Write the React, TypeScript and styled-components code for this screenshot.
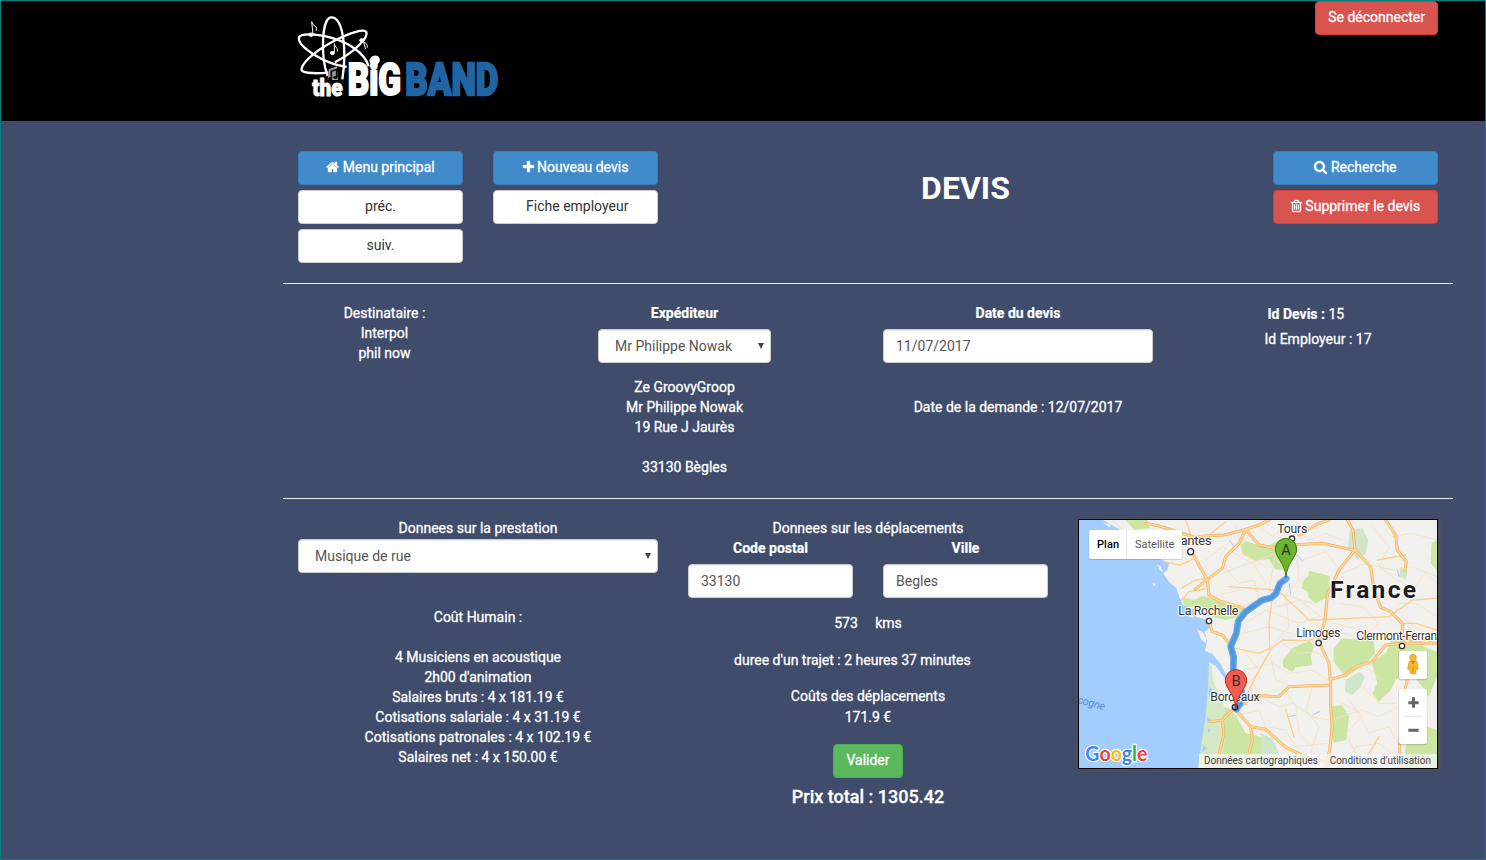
import React from "react";
import styled, { createGlobalStyle } from "styled-components";

const GlobalStyle = createGlobalStyle`
  * { box-sizing: border-box; }
  body {
    margin: 0;
    font: 400 14px/20px Roboto, sans-serif;
    color: #fff;
    background: #404c6b;
  }
`;

const Page = styled.div`
  height: 860px;
  overflow: hidden;
  border: 1px solid #008080;
  background: #404c6b;
`;

const Header = styled.header`
  display: flex;
  justify-content: space-between;
  align-items: flex-start;
  height: 120px;
  padding: 0 47px 0 297px;
  background: #000;
`;

const Logo = styled.svg`
  display: block;
  width: 204px;
  height: 90px;
  margin: 13px 0 0 -1px;
`;

const Main = styled.main`
  width: 1170px;
  margin-left: 282px;
`;

const tones = {
  primary: { bg: "#428bca", border: "#357ebd", text: "#fff" },
  danger: { bg: "#d9534f", border: "#d43f3a", text: "#fff" },
  success: { bg: "#5cb85c", border: "#4cae4c", text: "#fff" },
  plain: { bg: "#fff", border: "#ccc", text: "#333" },
};

const Button = styled.button<{ $tone: keyof typeof tones }>`
  display: flex;
  align-items: center;
  justify-content: center;
  gap: 3.5px;
  height: 34px;
  padding: 0 12px 2px;
  font: inherit;
  -webkit-text-stroke: ${(p) => (p.$tone === "plain" ? 0 : 0.3)}px currentColor;
  white-space: nowrap;
  color: ${(p) => tones[p.$tone].text};
  background: ${(p) => tones[p.$tone].bg};
  border: 1px solid ${(p) => tones[p.$tone].border};
  border-radius: 4px;
`;

const Toolbar = styled.section`
  display: flex;
  gap: 30px;
  height: 163px;
  padding: 30px 15px 0;
  border-bottom: 1px solid #eee;
`;

const ButtonStack = styled.div`
  display: flex;
  flex-direction: column;
  gap: 5px;
  width: 165px;
`;

const Title = styled.h1`
  flex: 1;
  margin: 17px 0 0;
  font-size: 32px;
  line-height: 40px;
  font-weight: 700;
  text-align: center;
`;

const Parties = styled.section`
  display: flex;
  height: 215px;
  padding-top: 19px;
  border-bottom: 1px solid #eee;
`;

const Column = styled.div<{ $width: number; $left?: number }>`
  width: ${(p) => p.$width}px;
  margin-left: ${(p) => p.$left ?? 0}px;
  text-align: center;
`;

const Line = styled.div<{ $top?: number }>`
  height: 20px;
  margin-top: ${(p) => p.$top ?? 0}px;
  -webkit-text-stroke: 0.3px currentColor;
  white-space: pre;

  b {
    -webkit-text-stroke: 0.2px currentColor;
  }
`;

const Label = styled.label`
  display: block;
  height: 20px;
  font-weight: 700;
  -webkit-text-stroke: 0.2px currentColor;
`;

const Field = styled.input`
  display: block;
  width: 100%;
  height: 34px;
  margin-top: 6px;
  padding: 0 12px;
  font: inherit;
  color: #555;
  background: #fff;
  border: 1px solid #ccc;
  border-radius: 4px;
  box-shadow: inset 0 1px 1px rgba(0, 0, 0, 0.075);
`;

const Select = styled.div<{ $top: number }>`
  display: flex;
  align-items: center;
  justify-content: space-between;
  height: 34px;
  margin-top: ${(p) => p.$top}px;
  padding: 0 6px 0 16px;
  color: #555;
  background: #fff;
  border: 1px solid #ccc;
  border-radius: 4px;
  box-shadow: inset 0 1px 1px rgba(0, 0, 0, 0.075);
`;

const Caret = styled.span`
  width: 0;
  border: solid transparent;
  border-width: 6px 3px 0;
  border-top-color: #444;
`;

const Details = styled.section`
  display: flex;
  gap: 30px;
  padding: 19px 15px 0;
`;

const Pair = styled.div`
  display: grid;
  grid-template-columns: 165px 165px;
  gap: 30px;
`;

const ValidateRow = styled.div`
  display: flex;
  justify-content: center;
  margin-top: 17px;
`;

const Total = styled.div`
  margin-top: 8px;
  font-size: 18px;
  line-height: 22px;
  font-weight: 500;
  -webkit-text-stroke: 0.3px currentColor;
`;

const MapFrame = styled.div`
  width: 360px;
  height: 250px;
  margin-top: 1px;
  border: 1px solid #000;
  box-shadow: 1px 1px 5px #555;
`;

const MapDrawing = styled.svg`
  display: block;
  width: 358px;
  height: 248px;
`;

const Glyph = styled.svg<{ $width: number }>`
  width: ${(p) => p.$width}px;
  height: 14px;
  fill: currentColor;
  stroke: currentColor;
  stroke-width: 40px;
`;

const glyphs = {
  home: {
    box: "64 0 1664 1792",
    width: 13,
    d: "M1472 992v480q0 26-19 45t-45 19h-384v-384h-256v384h-384q-26 0-45-19t-19-45v-480q0-1 .5-3t.5-3l575-474 575 474q1 2 1 6zm223-69l-62 74q-8 9-21 11h-3q-13 0-21-7l-692-577-692 577q-12 8-24 7-13-2-21-11l-62-74q-8-10-7-23.5t11-21.5l719-599q32-26 76-26t76 26l244 204v-195q0-14 9-23t23-9h192q14 0 23 9t9 23v408l219 182q10 8 11 21.5t-7 23.5z",
  },
  plus: {
    box: "192 0 1408 1792",
    width: 11,
    d: "M1600 736v192q0 40-28 68t-68 28h-416v416q0 40-28 68t-68 28h-192q-40 0-68-28t-28-68v-416h-416q-40 0-68-28t-28-68v-192q0-40 28-68t68-28h416v-416q0-40 28-68t68-28h192q40 0 68 28t28 68v416h416q40 0 68 28t28 68z",
  },
  search: {
    box: "64 0 1664 1792",
    width: 13,
    d: "M1216 832q0-185-131.5-316.5t-316.5-131.5-316.5 131.5-131.5 316.5 131.5 316.5 316.5 131.5 316.5-131.5 131.5-316.5zm512 832q0 52-38 90t-90 38q-54 0-90-38l-343-342q-179 124-399 124-143 0-273.5-55.5t-225-150-150-225-55.5-273.5 55.5-273.5 150-225 225-150 273.5-55.5 273.5 55.5 225 150 150 225 55.5 273.5q0 220-124 399l343 343q37 37 37 90z",
  },
  trash: {
    box: "192 0 1408 1792",
    width: 11,
    d: "M704 736v576q0 14-9 23t-23 9h-64q-14 0-23-9t-9-23v-576q0-14 9-23t23-9h64q14 0 23 9t9 23zm256 0v576q0 14-9 23t-23 9h-64q-14 0-23-9t-9-23v-576q0-14 9-23t23-9h64q14 0 23 9t9 23zm256 0v576q0 14-9 23t-23 9h-64q-14 0-23-9t-9-23v-576q0-14 9-23t23-9h64q14 0 23 9t9 23zm128 724v-948h-896v948q0 22 7 40.5t14.5 27 10.5 8.5h832q3 0 10.5-8.5t14.5-27 7-40.5zm-672-1076h448l-48-117q-7-9-17-11h-317q-10 2-17 11zm928 32v64q0 14-9 23t-23 9h-96v948q0 83-47 143.5t-113 60.5h-832q-66 0-113-58.5t-47-141.5v-952h-96q-14 0-23-9t-9-23v-64q0-14 9-23t23-9h309l70-167q15-37 54-63t79-26h320q40 0 79 26t54 63l70 167h309q14 0 23 9t9 23z",
  },
};

function Icon({ name }: { name: keyof typeof glyphs }) {
  const g = glyphs[name];
  return (
    <Glyph $width={g.width} viewBox={g.box} overflow="visible" aria-hidden>
      <path d={g.d} />
    </Glyph>
  );
}

function BandLogo() {
  return (
    <Logo viewBox="51 42 612 270" overflow="visible" aria-label="the Big Band">
      <g fill="none" stroke="#fff" strokeWidth="7">
        <path d="M143 228C121 170 125 54 153 52C190 50 201 150 187 238" />
        <path d="M200 201C130 190 51 139 57 112C66 88 240 112 266 199" />
        <path d="M145 218C95 222 60 219 65 205C78 155 246 73 259 96C266 113 225 155 165 187" />
      </g>
      <g fill="#fff" stroke="#fff" strokeWidth="3">
        <ellipse cx="93" cy="104" rx="7" ry="5" />
        <path d="M99 102L95 65Q100 78 109 82V92" fill="none" />
        <ellipse cx="157" cy="159" rx="6" ry="5" />
        <path d="M163 158V131Q165 142 172 146V155" fill="none" />
        <ellipse cx="245" cy="121" rx="6" ry="5" />
        <path d="M250 122L257 148M252 128Q262 128 262 143" fill="none" />
      </g>
      <path d="M146 208L171 198L174 240H143Z" fill="#999" />
      <path d="M154 236V214L170 208V232" fill="none" stroke="#000" strokeWidth="5" />
      <ellipse cx="150" cy="237" rx="6" ry="5" />
      <ellipse cx="166" cy="232" rx="6" ry="5" />
      <g fontFamily="Roboto, sans-serif" fontWeight="900">
        <text x="97" y="289" fontSize="70" fill="#fff" stroke="#fff" strokeWidth="2.500" textLength="91" lengthAdjust="spacingAndGlyphs">the</text>
        <text x="203" y="286" fontSize="134" fill="#fff" stroke="#fff" strokeWidth="6" textLength="160" lengthAdjust="spacingAndGlyphs">BiG</text>
        <text x="376" y="286" fontSize="134" fill="#2164a3" stroke="#2164a3" strokeWidth="7" textLength="279" lengthAdjust="spacingAndGlyphs">BAND</text>
      </g>
      <ellipse cx="284" cy="181" rx="16" ry="14" fill="#fff" transform="rotate(-25 284 181)" />
    </Logo>
  );
}

const forests = [
  "M485 75L500 62L560 82L600 60L628 105L612 150L588 148L570 118L530 122L492 105Z",
  "M672 182L688 168L690 152L722 160L752 168L750 200L744 232L710 250L690 235L685 215L668 205Z",
  "M308 232L345 240L370 228L410 236L450 245L490 262L485 290L440 300L400 290L378 262L318 262Z",
  "M612 420L640 385L690 362L704 372L696 412L700 436L650 442L640 456L612 440Z",
  "M764 385L790 355L842 358L884 345L888 402L850 440L800 470L764 425Z",
  "M878 425L920 400L935 362L1000 345L1034 380L1074 395V470L1050 530L1030 500L990 450L950 480L935 510L900 545L880 520L895 490Z",
  "M755 560L790 556L810 590L802 660L765 668L752 640Z",
  "M418 700L400 610L440 560L470 585L500 640L545 650L560 700L500 744H420Z",
  "M985 650L1045 620L1074 630V744H970Z",
  "M140 0H205L212 25L165 30Z",
  "M1058 70L1074 60V150L1055 130Z",
];

const paleForests = [
  "M812 30L850 25L868 60L860 100L835 120L808 80Z",
  "M800 480L840 455L858 470L845 500L820 525L798 515Z",
  "M545 640L580 655L600 700L580 744H540L548 690Z",
  "M965 140L985 155L980 180L960 168Z",
  "M980 570L995 560L990 600L975 610Z",
];

const thinRoads = [
  "M215 60L270 110L345 95M255 10L300 90M430 160L590 100L570 210L700 250",
  "M380 120L430 80L520 130L560 190M400 230L520 200L600 260L660 240L740 300",
  "M440 145L480 190L525 180L540 240L490 260M650 80L660 180L620 225L630 320L570 390L590 480L640 500",
  "M500 310L560 270L660 310L720 290M495 340L570 320L650 345L720 370M500 450L580 430L630 460L700 450L760 490",
  "M520 480L540 530L600 560L640 550L700 590L750 600M460 590L540 570L560 620L620 630L650 680L745 670",
  "M620 510L650 560L660 640L700 680L690 744M700 500L680 570L720 620L700 680M760 600L850 570L900 590L960 560",
  "M770 540L830 570L870 640L930 620L960 680M790 744L830 680L900 670L940 700M880 20L930 80L900 140L970 190",
  "M640 20L690 60L740 40L790 60M670 120L740 95L790 160L860 130L940 150L1000 140L1074 170",
  "M780 250L850 260L900 310L850 350L790 340M930 200L1000 210L1040 160L1074 190M940 50L1000 40L1074 60",
  "M960 250L1010 250L1074 290M980 300L1040 340L1074 330M730 300L800 320L860 330M610 370L660 400L710 395L760 430",
  "M470 20L490 100L560 140M100 0L145 40L220 30L260 60M530 10L580 50L620 20M500 400L540 450L510 490",
  "M850 500L900 550L950 550M860 440L910 480M810 540L850 590L800 640L830 700",
];

const mediumRoads = [
  "M262 128L305 135L345 115M307 205L350 180L385 175M308 240L330 215L380 207",
  "M450 200L520 205L588 210M590 205L690 300L710 300L930 290L1000 240L1074 235",
  "M580 230L570 310L572 385L540 400L455 382M572 390L610 360L690 362L740 340",
  "M572 395L530 470L505 520M500 548L545 530M620 568L645 650M340 60L320 0M895 120L980 105",
  "M970 310L1010 310L1074 330M1074 370L1040 360L970 378M900 650L870 700L850 744M440 5L390 45",
];

const highways = [
  "M338 95L385 180L390 225L425 245L490 262L500 285M200 10L240 18L280 30L340 50L435 45L500 28L540 75L590 85L635 75L730 70L822 90",
  "M500 28L540 15L570 0M500 28L480 70L440 110L430 145L380 182L348 208M660 45L715 12L750 0",
  "M805 0L822 30L828 90L780 150L745 225L738 300L720 365L750 430L755 495L755 560L760 620L752 690L740 744",
  "M828 90L875 140L885 210L905 262L935 275L970 310L970 378M920 0L950 45L955 90L982 125L978 150",
  "M500 525L600 530L630 500L750 495M755 478L800 465L830 440L880 425L920 375L965 370L1074 370",
  "M390 305L400 335L430 345L450 370L465 460L470 570M500 550L468 562L430 600L395 605M430 600L435 640L410 744",
  "M475 575L515 620L560 628L590 655M515 620L520 660L505 720M590 655L620 682L680 710L755 730M970 378L985 480L970 540L962 680L965 744",
];

function Pin({ x, y, fill, edge, letter }: { x: number; y: number; fill: string; edge: string; letter: string }) {
  return (
    <g transform={`translate(${x} ${y})`}>
      <path d="M0 0C-2 -45 -32 -60 -32 -86A32 32 0 1 1 32 -86C32 -60 2 -45 0 0Z" fill={fill} stroke={edge} strokeWidth="3" />
      <text y="-69" textAnchor="middle" fontSize="44" fill="#333">{letter}</text>
    </g>
  );
}

const Place = styled.text<{ $size?: number }>`
  font-size: ${(p) => p.$size ?? 37}px;
  fill: #333;
  stroke: #fff;
  stroke-width: 7px;
  stroke-opacity: 0.8;
  paint-order: stroke;
  stroke-linejoin: round;
`;

function RouteMap() {
  return (
    <MapDrawing viewBox="0 0 1074 744" fontFamily="Roboto, sans-serif">
      <rect width="1074" height="744" fill="#f2f0ed" />
      {forests.map((d) => <path key={d} d={d} fill="#cbe6a3" />)}
      {paleForests.map((d) => <path key={d} d={d} fill="#d1e5ca" />)}
      <path d="M388 425L370 600L358 744H425L440 640L425 600L440 570L402 480L398 440Z" fill="#d5e8c4" />
      <path
        d="M0 0H72L110 22L135 35L150 58L175 50L200 52L230 110L270 130L265 150L252 160L270 185L292 205L302 235L312 255L345 268L350 290L385 300L393 325L376 335L385 360L378 392L400 402L425 432L440 462L452 500L440 480L412 440L390 425L388 480L380 590L372 640L365 690L357 744H0Z"
        fill="#a3ccff"
      />
      <path d="M354 328L370 335L383 355L380 370L366 358ZM318 275L345 288L343 294L320 286ZM235 132L245 140L252 155L243 152ZM222 188L232 196L222 197ZM72 8L95 14L92 22Z" fill="#f2f0ed" />
      <path d="M384 590L398 600L386 610ZM386 624L396 628L388 640ZM372 675L384 685L370 695ZM392 500L400 510L394 530L388 520Z" fill="#a3ccff" />
      <path d="M650 100L672 125M630 190L636 225M450 60L470 85M630 590L650 585M700 585L722 575M845 430L852 422M955 150L960 170" fill="none" stroke="#a3ccff" strokeWidth="3" />
      <g fill="none" strokeLinejoin="round" strokeLinecap="round">
        {thinRoads.map((d) => <path key={d} d={d} stroke="#f3dfc4" strokeWidth="2.5" />)}
        {mediumRoads.map((d) => <path key={d} d={d} stroke="#fbcf8c" strokeWidth="4" />)}
        {highways.map((d) => <path key={d} d={d} stroke="#eeb465" strokeWidth="9" />)}
        {highways.map((d) => <path key={`${d}-core`} d={d} stroke="#ffd596" strokeWidth="5" />)}
      </g>
      <g fill="#fff" stroke="#333" strokeWidth="4">
        <circle cx="335" cy="95" r="9" />
        <circle cx="639" cy="56" r="8" />
        <circle cx="390" cy="303" r="8" />
        <circle cx="719" cy="369" r="8" />
        <circle cx="969" cy="378" r="8" />
      </g>
      <g fill="none" strokeLinejoin="round" strokeLinecap="round">
        <path d="M622 176L603 190L590 222L575 234L550 240L500 275L478 303L472 340L455 380L464 410L462 470L488 515L484 550L472 568" stroke="#5fa9f5" strokeWidth="20" />
        <path d="M612 184L603 190L590 222L575 234L550 240L500 275L478 303L472 340L455 380L464 410L462 470L488 515L484 550L472 568" stroke="#5597d6" strokeWidth="12" />
      </g>
      <circle cx="468" cy="562" r="8" fill="none" stroke="#222" strokeWidth="4" />
      <Place x="277" y="75" $size={40} textLength="121">Nantes</Place>
      <Place x="595" y="39" textLength="90">Tours</Place>
      <Place x="298" y="285" textLength="180">La Rochelle</Place>
      <Place x="652" y="351" textLength="132">Limoges</Place>
      <Place x="832" y="360" textLength="262">Clermont-Ferrand</Place>
      <Place x="394" y="543" textLength="148">Bordeaux</Place>
      <text x="753" y="235" fontSize="74" fontWeight="700" fill="#1c1c1c" stroke="#fff" strokeWidth="5" paintOrder="stroke" textLength="258">France</text>
      <text transform="translate(-6 549) rotate(15)" fontSize="33" fontStyle="italic" fill="#5b8dca" textLength="84">cogne</text>
      <Pin x={621} y={173} fill="#6cb52d" edge="#3c7516" letter="A" />
      <Pin x={471} y={567} fill="#f45b50" edge="#a5342e" letter="B" />

      <rect x="29" y="31" width="281" height="89" rx="6" fill="#000" opacity="0.15" />
      <rect x="30" y="30" width="279" height="87" rx="6" fill="#fff" />
      <path d="M143 30V117" stroke="#e6e6e6" strokeWidth="3" />
      <text x="54" y="84" fontSize="33" fontWeight="500" textLength="66">Plan</text>
      <text x="168" y="84" fontSize="33" fill="#565656" textLength="118">Satellite</text>

      <rect x="958" y="394" width="87" height="87" rx="6" opacity="0.15" />
      <rect x="960" y="393" width="84" height="84" rx="6" fill="#fff" />
      <path d="M990 425Q1001 418 1014 425L1018 447L1011 450L1010 461H994L993 450L986 447Z" fill="#fbb829" stroke="#d39a27" strokeWidth="2" />
      <path d="M996 424L1002 432L1009 424Z" fill="#e0622a" />
      <path d="M1002 440V461" stroke="#c98a1d" strokeWidth="2" />
      <circle cx="1002" cy="413" r="10" fill="#fbb829" stroke="#d39a27" strokeWidth="2" />
      <rect x="958" y="508" width="87" height="168" rx="6" opacity="0.15" />
      <rect x="960" y="507" width="84" height="165" rx="6" fill="#fff" />
      <path d="M972 589H1029" stroke="#e6e6e6" strokeWidth="3" />
      <path d="M988 548H1019M1003.500 532V563M988 631H1019" stroke="#666" strokeWidth="9" />

      <rect x="360" y="702" width="714" height="42" fill="#f5f5f5" opacity="0.75" />
      <text x="375" y="732" fontSize="30" fill="#444" textLength="342">Données cartographiques</text>
      <text x="752" y="732" fontSize="30" fill="#444" textLength="304">Conditions d'utilisation</text>
      <g fontFamily="Lato, sans-serif" fontSize="60" fontWeight="700" stroke="#fff" strokeWidth="7" paintOrder="stroke" strokeLinejoin="round">
        <text x="19" y="722" textLength="186" lengthAdjust="spacingAndGlyphs">
          <tspan fill="#4285f4">G</tspan>
          <tspan fill="#ea4335">o</tspan>
          <tspan fill="#fbbc05">o</tspan>
          <tspan fill="#4285f4">g</tspan>
          <tspan fill="#34a853">l</tspan>
          <tspan fill="#ea4335">e</tspan>
        </text>
      </g>
    </MapDrawing>
  );
}

export default function App() {
  return (
    <Page>
      <GlobalStyle />
      <Header>
        <BandLogo />
        <Button $tone="danger">Se déconnecter</Button>
      </Header>
      <Main>
        <Toolbar>
          <ButtonStack>
            <Button $tone="primary"><Icon name="home" />Menu principal</Button>
            <Button $tone="plain">préc.</Button>
            <Button $tone="plain">suiv.</Button>
          </ButtonStack>
          <ButtonStack>
            <Button $tone="primary"><Icon name="plus" />Nouveau devis</Button>
            <Button $tone="plain">&nbsp;Fiche employeur</Button>
          </ButtonStack>
          <Title>DEVIS</Title>
          <ButtonStack>
            <Button $tone="primary"><Icon name="search" />Recherche</Button>
            <Button $tone="danger"><Icon name="trash" />Supprimer le devis</Button>
          </ButtonStack>
        </Toolbar>

        <Parties>
          <Column $width={173} $left={15}>
            <Line>Destinataire :</Line>
            <Line>Interpol</Line>
            <Line>phil now</Line>
          </Column>
          <Column $width={173} $left={127}>
            <Label>Expéditeur</Label>
            <Select $top={6}>Mr Philippe Nowak<Caret /></Select>
            <Line $top={14}>Ze GroovyGroop</Line>
            <Line>Mr Philippe Nowak</Line>
            <Line>19 Rue J Jaurès</Line>
            <Line $top={20}>33130 Bègles</Line>
          </Column>
          <Column $width={270} $left={112}>
            <Label>Date du devis</Label>
            <Field defaultValue="11/07/2017" />
            <Line $top={34}>Date de la demande : 12/07/2017</Line>
          </Column>
          <Column $width={270} $left={30}>
            <Line $top={1}><b>Id Devis :</b> 15{"       "}</Line>
            <Line $top={5}>Id Employeur : 17</Line>
          </Column>
        </Parties>

        <Details>
          <Column $width={360}>
            <Line>Donnees sur la prestation</Line>
            <Select $top={1}>Musique de rue<Caret /></Select>
            <Line $top={34}>Coût Humain :</Line>
            <Line $top={20}>4 Musiciens en acoustique</Line>
            <Line>2h00 d'animation</Line>
            <Line>Salaires bruts : 4 x 181.19 €</Line>
            <Line>Cotisations salariale : 4 x 31.19 €</Line>
            <Line>Cotisations patronales : 4 x 102.19 €</Line>
            <Line>Salaires net : 4 x 150.00 €</Line>
          </Column>
          <Column $width={360}>
            <Line>Donnees sur les déplacements</Line>
            <Pair>
              <div>
                <Label>Code postal</Label>
                <Field defaultValue="33130" />
              </div>
              <div>
                <Label>Ville</Label>
                <Field defaultValue="Begles" />
              </div>
            </Pair>
            <Line $top={15}>573{"    "} kms</Line>
            <Line $top={17}>duree d'un trajet : 2 heures 37 minutes{"         "}</Line>
            <Line $top={16}>Coûts des déplacements</Line>
            <Line $top={1}>171.9 €</Line>
            <ValidateRow>
              <Button $tone="success">Valider</Button>
            </ValidateRow>
            <Total>Prix total : 1305.42</Total>
          </Column>
          <MapFrame>
            <RouteMap />
          </MapFrame>
        </Details>
      </Main>
    </Page>
  );
}
